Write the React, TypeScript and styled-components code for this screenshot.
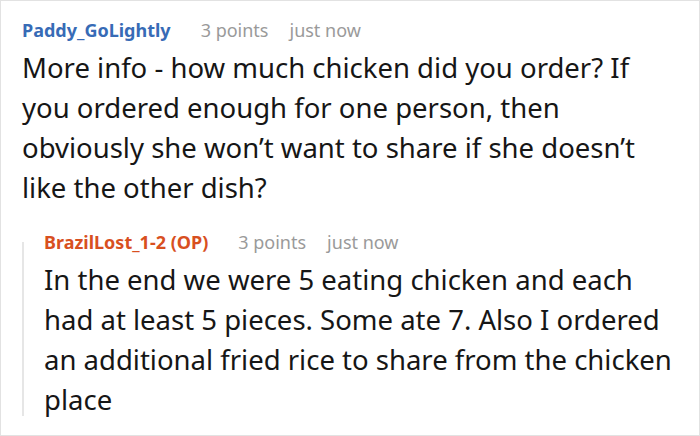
import styled, { createGlobalStyle } from "styled-components";

const GlobalStyle = createGlobalStyle`
  html, body {
    margin: 0;
    padding: 0;
    background: #fff;
  }
  body {
    font-family: "Noto Sans", "Open Sans", sans-serif;
  }
`;

const Frame = styled.div`
  width: 700px;
  height: 436px;
  box-sizing: border-box;
  border: 1px solid #e2e2e2;
  padding: 15px 14px 0 21px;
  overflow: hidden;
`;

const Comment = styled.div`
  display: flex;
  flex-direction: column;
`;

const Reply = styled.div`
  position: relative;
  margin-top: 20px;
  padding-left: 22px;

  &::before {
    content: "";
    position: absolute;
    left: 0;
    top: 14px;
    bottom: 4px;
    width: 2px;
    background: #e6e6e6;
  }
`;

const Header = styled.div`
  display: flex;
  align-items: baseline;
  height: 28px;
  line-height: 28px;
  font-size: 18px;
`;

const Author = styled.span<{ $op?: boolean }>`
  font-weight: 700;
  color: ${(p) => (p.$op ? "#d8501f" : "#376bb6")};
  margin-right: 30px;
`;

const Meta = styled.span`
  color: #9a9a9a;
  margin-right: 21px;
`;

const Body = styled.p`
  margin: 4px 0 0;
  font-size: 27.5px;
  line-height: 40px;
  color: #161616;
`;

const Line = styled.span`
  display: block;
  white-space: nowrap;
`;

type Props = {
  author: string;
  op?: boolean;
  points: string;
  time: string;
  lines: string[];
};

const Entry = ({ author, op, points, time, lines }: Props) => (
  <Comment>
    <Header>
      <Author $op={op}>{author}</Author>
      <Meta>{points}</Meta>
      <Meta>{time}</Meta>
    </Header>
    <Body>
      {lines.map((l) => (
        <Line key={l}>{l}</Line>
      ))}
    </Body>
  </Comment>
);

export default function App() {
  return (
    <>
      <GlobalStyle />
      <Frame>
        <Entry
          author="Paddy_GoLightly"
          points="3 points"
          time="just now"
          lines={[
            "More info - how much chicken did you order? If",
            "you ordered enough for one person, then",
            "obviously she won’t want to share if she doesn’t",
            "like the other dish?",
          ]}
        />
        <Reply>
          <Entry
            author="BrazilLost_1-2 (OP)"
            op
            points="3 points"
            time="just now"
            lines={[
              "In the end we were 5 eating chicken and each",
              "had at least 5 pieces. Some ate 7. Also I ordered",
              "an additional fried rice to share from the chicken",
              "place",
            ]}
          />
        </Reply>
      </Frame>
    </>
  );
}
